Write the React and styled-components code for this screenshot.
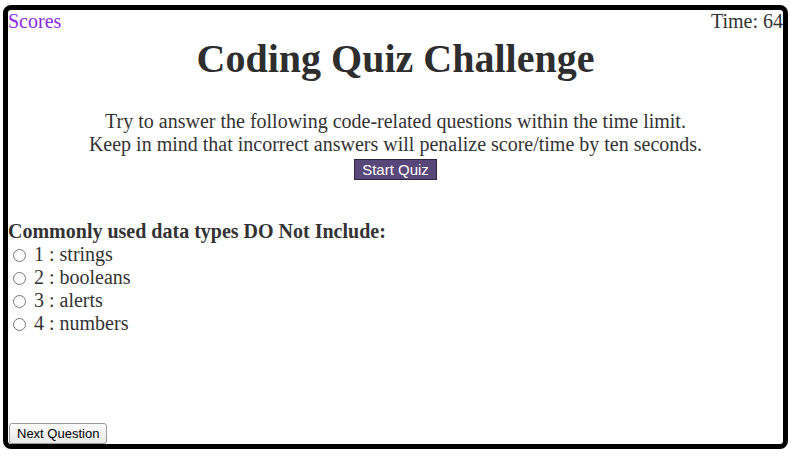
import React from "react";
import { useState } from "react";
//style
import styled, { createGlobalStyle } from "styled-components";

const questions = [
  {
    title: "Commonly used data types DO Not Include:",
    choices: ["strings", "booleans", "alerts", "numbers"],
  },
];

const App = () => {
  //state
  const [time] = useState(64);
  const [picked, setPicked] = useState("");
  const question = questions[0];

  return (
    <>
      <GlobalStyle />
      <StyledFrame>
        <Header>
          <ScoresLink href="#scores">Scores</ScoresLink>
          <span>Time: {time}</span>
        </Header>

        <Title>Coding Quiz Challenge</Title>
        <Intro>
          Try to answer the following code-related questions within the time
          limit.
          <br />
          Keep in mind that incorrect answers will penalize score/time by ten
          seconds.
        </Intro>
        <StartButton>Start Quiz</StartButton>

        <Question>
          <h3>{question.title}</h3>
          {question.choices.map((choice, i) => (
            <Choice key={choice}>
              <input
                type="radio"
                name="answer"
                value={choice}
                checked={picked === choice}
                onChange={(e) => setPicked(e.target.value)}
              />{" "}
              {i + 1} : {choice}
            </Choice>
          ))}
        </Question>

        <NextButton>Next Question</NextButton>
      </StyledFrame>
    </>
  );
};

const GlobalStyle = createGlobalStyle`
  body {
    margin: 0;
    background: #fff;
    font-family: "Liberation Serif", "Times New Roman", serif;
    font-size: 20px;
    color: #333;
  }
`;

const StyledFrame = styled.div`
  box-sizing: border-box;
  height: 444px;
  margin: 5px 3px 0;
  border: 5px solid #000;
  border-radius: 8px;
  display: flex;
  flex-direction: column;
  line-height: 23px;
`;

const Header = styled.div`
  display: flex;
  justify-content: space-between;
  align-items: baseline;
`;

const ScoresLink = styled.a`
  color: #8a2be2;
  text-decoration: none;
`;

const Title = styled.h1`
  margin: 0;
  padding-top: 10px;
  font-size: 40px;
  line-height: 32px;
  text-align: center;
  color: #2e2e2e;
`;

const Intro = styled.p`
  margin: 35px 0 0;
  text-align: center;
`;

const StartButton = styled.button`
  align-self: center;
  margin-top: 3px;
  padding: 1px 7px;
  height: 21px;
  font-family: "Liberation Sans", Arial, sans-serif;
  font-size: 15px;
  line-height: 17px;
  color: #fff;
  background: #584879;
  border: 1px solid #2f2542;
  border-radius: 0;
`;

const Question = styled.div`
  margin-top: 40px;
  h3 {
    margin: 0;
    font-size: 20px;
    line-height: 23px;
  }
`;

const Choice = styled.label`
  display: block;
  height: 23px;
  input {
    margin: 0 3px 0 5px;
    width: 13px;
    height: 13px;
    vertical-align: -1px;
  }
`;

const NextButton = styled.button`
  align-self: flex-start;
  margin: auto 0 0 1px;
  padding: 1px 7px;
  height: 21px;
  font-family: "Liberation Sans", Arial, sans-serif;
  font-size: 13px;
  color: #000;
  background: linear-gradient(#fbfbfb, #e8e8e8);
  border: 1px solid #9a9a9a;
  border-radius: 3px;
`;

export default App;
